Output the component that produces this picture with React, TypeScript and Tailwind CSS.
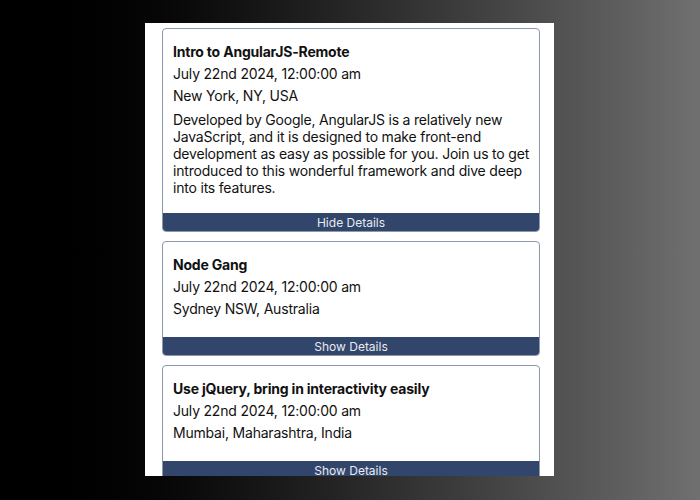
const events = [
  {
    title: 'Intro to AngularJS-Remote',
    date: 'July 22nd 2024, 12:00:00 am',
    location: 'New York, NY, USA',
    description:
      'Developed by Google, AngularJS is a relatively new JavaScript, and it is designed to make front-end development as easy as possible for you. Join us to get introduced to this wonderful framework and dive deep into its features.',
    open: true,
  },
  {
    title: 'Node Gang',
    date: 'July 22nd 2024, 12:00:00 am',
    location: 'Sydney NSW, Australia',
    description: '',
    open: false,
  },
  {
    title: 'Use jQuery, bring in interactivity easily',
    date: 'July 22nd 2024, 12:00:00 am',
    location: 'Mumbai, Maharashtra, India',
    description: '',
    open: false,
  },
];

type EventItem = (typeof events)[number];

const EventCard = ({ event }: { event: EventItem }) => (
  <div className="border border-[#8c98ae] rounded-[4px] overflow-hidden bg-white shrink-0">
    <div className="pl-[10px] pr-[6px] pt-[12px] pb-[17px] text-[14px] tracking-[-0.2px] text-[#111]">
      <h2 className="font-bold leading-[22px]">{event.title}</h2>
      <p className="leading-[22px]">{event.date}</p>
      <p className="leading-[22px]">{event.location}</p>
      {event.open && <p className="mt-[4px] leading-[17px]">{event.description}</p>}
    </div>
    <button className="block w-full h-[18px] bg-[#32456a] text-[#e8ebf0] text-[12px] leading-[17px] text-center">
      {event.open ? 'Hide Details' : 'Show Details'}
    </button>
  </div>
);

export default function App() {
  return (
    <div
      className="w-[700px] h-[500px] bg-gradient-to-r from-[#000] to-[#707070] pt-[23px] pl-[145px]"
      style={{ fontFamily: 'Inter, "Noto Sans", sans-serif' }}
    >
      <div className="w-[409px] h-[453px] bg-white overflow-hidden pt-[5px] pl-[17px] pr-[14px] flex flex-col gap-[9px]">
        {events.map((e) => (
          <EventCard key={e.title} event={e} />
        ))}
      </div>
    </div>
  );
}
